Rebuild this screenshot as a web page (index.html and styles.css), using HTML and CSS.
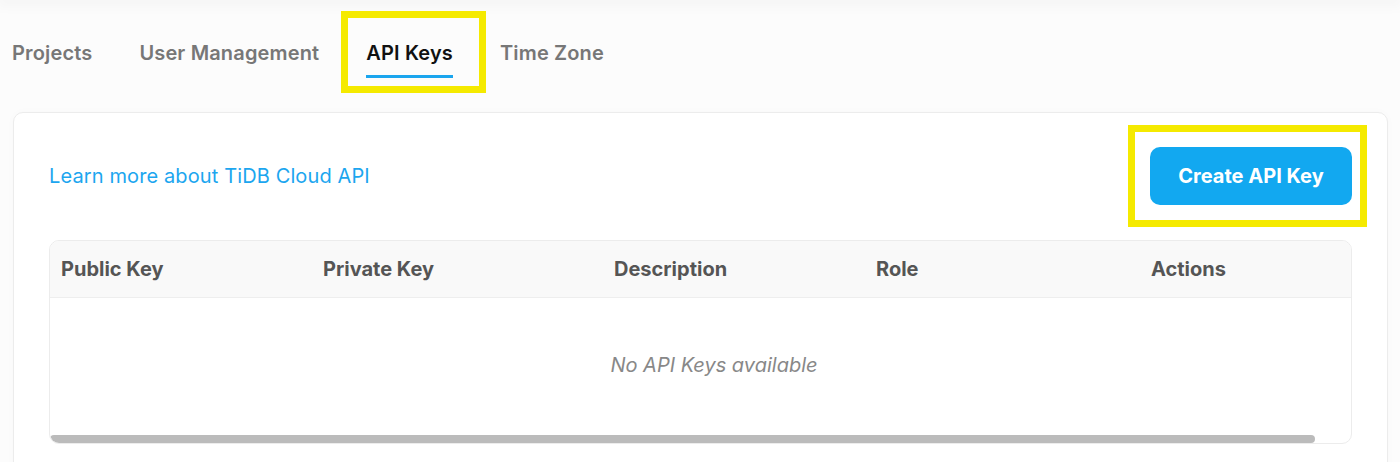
FILE: index.html
```html
<!DOCTYPE html>
<html lang="en">
<head>
    <meta charset="UTF-8">
    <meta name="viewport" content="width=device-width, initial-scale=1.0">
    <title>Organization Settings - API Keys</title>
    <link rel="stylesheet" href="styles.css">
</head>
<body>

<div class="topbar"></div>

<nav class="tabs">
    <a class="tab" href="#">Projects</a>
    <a class="tab" href="#">User Management</a>
    <a class="tab active" href="#">API Keys<span class="highlight hl-tab"></span></a>
    <a class="tab" href="#">Time Zone</a>
</nav>

<div class="card">
    <div class="card-head">
        <a class="learn-link" href="#">Learn more about TiDB Cloud API</a>
        <div class="btn-wrap">
            <button type="button" class="create-btn">Create API Key</button>
            <span class="highlight hl-btn"></span>
        </div>
    </div>

    <div class="table-wrap">
        <div class="table-scroll">
            <table class="keys-table">
                <thead>
                    <tr>
                        <th class="col-public">Public Key</th>
                        <th class="col-private">Private Key</th>
                        <th class="col-desc">Description</th>
                        <th class="col-role">Role</th>
                        <th class="col-actions">Actions</th>
                    </tr>
                </thead>
                <tbody>
                    <tr>
                        <td class="empty" colspan="5">No API Keys available</td>
                    </tr>
                </tbody>
            </table>
        </div>
        <div class="scrollbar"><div class="scroll-thumb"></div></div>
    </div>
</div>

</body>
</html>
```

FILE: styles.css
```css
body {
    margin: 0;
    background-color: #fcfcfc;
    font-family: Inter, "Noto Sans", Arial, sans-serif;
    color: #222222;
}

.topbar {
    height: 0;
    box-shadow: 0 0 14px 4px rgba(0, 0, 0, 0.05);
}

.tabs {
    display: flex;
    gap: 47px;
    padding: 41px 0 0 12px;
}

.tab {
    position: relative;
    display: block;
    font-size: 20px;
    line-height: 24px;
    font-weight: 600;
    letter-spacing: 0.15px;
    color: #777777;
    text-decoration: none;
    padding-bottom: 10px;
    border-bottom: 3px solid transparent;
}

.tab.active {
    color: #111111;
    border-bottom-color: #1aa5ee;
}

.highlight {
    position: absolute;
    border: 7px solid #f5ea00;
    pointer-events: none;
}

.hl-tab {
    left: -25px;
    right: -33px;
    top: -30px;
    bottom: -18px;
}

.card {
    margin: 34px 12px 0 13px;
    background-color: #ffffff;
    border: 1px solid #ececec;
    border-radius: 10px;
    padding: 34px 35px 40px 35px;
    box-shadow: 0 0 10px rgba(0, 0, 0, 0.02);
}

.card-head {
    display: flex;
    justify-content: space-between;
    align-items: center;
}

.learn-link {
    color: #1ca6ef;
    font-size: 20px;
    letter-spacing: 0.12px;
    text-decoration: none;
}

.btn-wrap {
    position: relative;
}

.create-btn {
    display: block;
    width: 202px;
    height: 58px;
    border: none;
    border-radius: 10px;
    background-color: #12a8f0;
    color: #ffffff;
    font-family: inherit;
    font-size: 20px;
    font-weight: 700;
    cursor: pointer;
}

.hl-btn {
    left: -22px;
    right: -15px;
    top: -22px;
    bottom: -22px;
}

.table-wrap {
    margin-top: 35px;
    border: 1px solid #ececec;
    border-radius: 10px;
    overflow: hidden;
}

.table-scroll {
    overflow: hidden;
}

.keys-table {
    width: 1328px;
    border-collapse: collapse;
    table-layout: fixed;
}

.keys-table th {
    height: 56px;
    padding: 0 12px 0 11px;
    text-align: left;
    font-size: 20px;
    font-weight: 700;
    color: #555555;
    background-color: #f9f9f9;
    border-bottom: 1px solid #eeeeee;
}

.col-public { width: 239px; }
.col-private { width: 268px; }
.col-desc { width: 239px; }
.col-role { width: 252px; }

.empty {
    height: 133px;
    padding: 0 0 4px 0;
    text-align: center;
    font-size: 20px;
    font-style: italic;
    color: #888888;
}

.scrollbar {
    height: 8px;
}

.scroll-thumb {
    width: 1265px;
    height: 100%;
    background-color: #bbbbbb;
    border-radius: 4px;
}
```
